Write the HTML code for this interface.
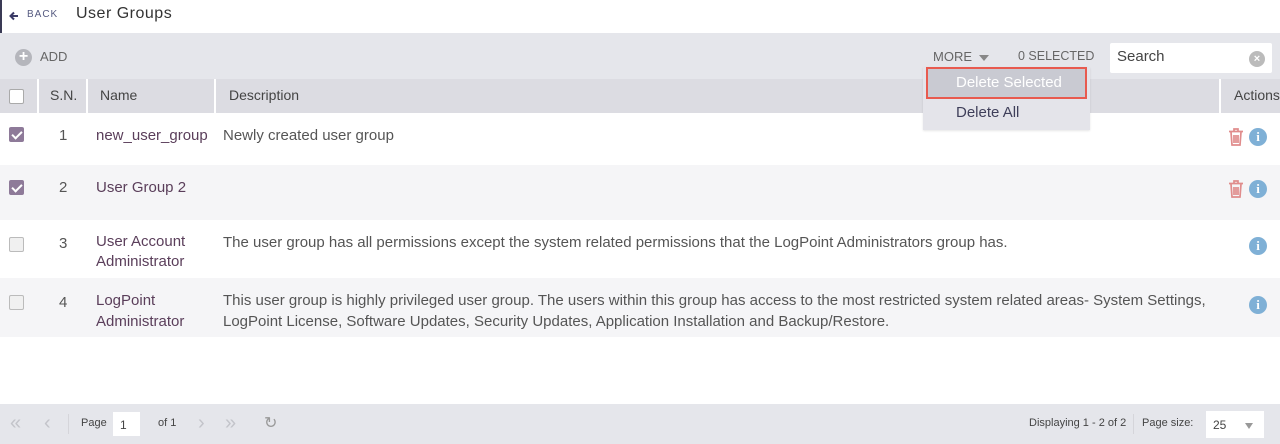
<!DOCTYPE html>
<html><head><style>
*{margin:0;padding:0;box-sizing:border-box}
body{width:1280px;height:444px;overflow:hidden;background:#fff;font-family:"Liberation Sans",sans-serif;color:#555;position:relative}
.abs{position:absolute}
.hdr{top:0;left:0;width:1280px;height:33px;background:#fff;border-left:2px solid #3a3a55}
.tb{top:33px;left:0;width:1280px;height:46px;background:#e5e6eb}
.th{top:79px;left:0;width:1280px;height:34px;background:#dcdce2;font-size:14px;color:#444}
.row{left:0;width:1280px;font-size:15px}
.cb{position:absolute;left:9px;width:15px;height:15px;border:1px solid #aaa;background:#fff;border-radius:2px}
.cb.on{background:#8e7a99;border-color:#8e7a99}
.cb.on:after{content:"";position:absolute;left:4px;top:1px;width:4px;height:8px;border:solid #fff;border-width:0 2px 2px 0;transform:rotate(45deg)}
.sep{position:absolute;top:0;width:2px;height:34px;background:#fff}
.foot{top:404px;left:0;width:1280px;height:40px;background:#e5e6eb;font-size:11px;color:#444}
.info{position:absolute;width:18px;height:18px;border-radius:50%;background:#7fb0d6;color:#fff;font-size:13px;font-weight:bold;text-align:center;line-height:18px;font-family:"Liberation Serif",serif}
.trash{position:absolute;width:16px;height:18px}
.name{color:#5a3e5a}
</style></head><body>
<div class="abs hdr">
 <svg class="abs" style="left:7px;top:11px" width="10" height="10" viewBox="0 0 10 10"><path d="M9 5H2M5 1.5L1.5 5 5 8.5" stroke="#3a3a66" stroke-width="2" fill="none"/></svg>
 <span class="abs" style="left:25px;top:9px;font-size:10px;letter-spacing:1px;color:#555a80">BACK</span>
 <span class="abs" style="left:74px;top:5px;font-size:16px;color:#333;letter-spacing:.5px">User Groups</span>
</div>
<div class="abs tb">
 <div class="abs" style="left:15px;top:16px;width:17px;height:17px;border-radius:50%;background:#b5b6bc;color:#fff;font-size:16px;line-height:16px;text-align:center;font-weight:bold">+</div>
 <span class="abs" style="left:40px;top:16px;font-size:13px;color:#666">ADD</span>
 <span class="abs" style="left:933px;top:16px;font-size:13px;color:#666">MORE</span>
 <div class="abs" style="left:979px;top:22px;border:5px solid transparent;border-top:6px solid #888"></div>
 <span class="abs" style="left:1018px;top:16px;font-size:12.5px;color:#666">0 SELECTED</span>
 <div class="abs" style="left:1110px;top:10px;width:162px;height:30px;background:#fff;border-radius:2px">
  <span class="abs" style="left:7px;top:5px;font-size:15px;color:#444">Search</span>
  <div class="abs" style="left:139px;top:8px;width:16px;height:16px;border-radius:50%;background:#bbb;color:#fff;font-size:11px;text-align:center;line-height:16px;font-weight:bold">×</div>
 </div>
</div>
<div class="abs th">
 <div class="cb" style="top:10px"></div>
 <div class="sep" style="left:37px"></div><div class="sep" style="left:86px"></div><div class="sep" style="left:214px"></div><div class="sep" style="left:1219px"></div>
 <span class="abs" style="left:50px;top:8px">S.N.</span>
 <span class="abs" style="left:100px;top:8px">Name</span>
 <span class="abs" style="left:229px;top:8px">Description</span>
 <span class="abs" style="left:1234px;top:8px">Actions</span>
</div>
<div class="abs row" style="top:113px;height:52px;background:#fff">
 <div class="cb on" style="top:14px"></div>
 <span class="abs" style="left:59px;top:14px">1</span>
 <span class="abs name" style="left:96px;top:14px">new_user_group</span>
 <span class="abs" style="left:223px;top:14px">Newly created user group</span>
 <svg class="trash" style="left:1228px;top:15px" viewBox="0 0 16 18"><path d="M1 3.5h14M6 3V1h4v2M3 4l1 13h8l1-13M6 7v8M8 7v8M10 7v8" stroke="#e08c8c" stroke-width="1.7" fill="none"/></svg>
 <div class="info" style="left:1249px;top:15px">i</div>
</div>
<div class="abs row" style="top:165px;height:55px;background:#f5f5f7">
 <div class="cb on" style="top:15px"></div>
 <span class="abs" style="left:59px;top:14px">2</span>
 <span class="abs name" style="left:96px;top:14px">User Group 2</span>
 <svg class="trash" style="left:1228px;top:15px" viewBox="0 0 16 18"><path d="M1 3.5h14M6 3V1h4v2M3 4l1 13h8l1-13M6 7v8M8 7v8M10 7v8" stroke="#e08c8c" stroke-width="1.7" fill="none"/></svg>
 <div class="info" style="left:1249px;top:15px">i</div>
</div>
<div class="abs row" style="top:220px;height:58px;background:#fff">
 <div class="cb" style="top:17px;border-color:#bbb;background:#f0f0f0"></div>
 <span class="abs" style="left:59px;top:15px">3</span>
 <span class="abs name" style="left:96px;top:12px;line-height:20px">User Account<br>Administrator</span>
 <span class="abs" style="left:223px;top:14px">The user group has all permissions except the system related permissions that the LogPoint Administrators group has.</span>
 <div class="info" style="left:1249px;top:17px">i</div>
</div>
<div class="abs row" style="top:278px;height:59px;background:#f5f5f7">
 <div class="cb" style="top:17px;border-color:#bbb;background:#f0f0f0"></div>
 <span class="abs" style="left:59px;top:16px">4</span>
 <span class="abs name" style="left:96px;top:12px;line-height:21px">LogPoint<br>Administrator</span>
 <span class="abs" style="left:223px;top:12px;line-height:21px">This user group is highly privileged user group. The users within this group has access to the most restricted system related areas- System Settings,<br>LogPoint License, Software Updates, Security Updates, Application Installation and Backup/Restore.</span>
 <div class="info" style="left:1249px;top:18px">i</div>
</div>
<div class="abs" style="left:923px;top:67px;width:167px;height:63px;background:#e4e4ea;box-shadow:0 1px 2px rgba(0,0,0,.1)">
 <div class="abs" style="left:3px;top:0;width:161px;height:32px;background:#c9cad2;border:2px solid #e85a4f"></div>
 <span class="abs" style="left:33px;top:7px;font-size:15px;color:#fff">Delete Selected</span>
 <span class="abs" style="left:33px;top:37px;font-size:15px;color:#3f3f5a">Delete All</span>
</div>
<div class="abs foot">
 <span class="abs" style="left:10px;top:8px;font-size:20px;color:#c3c4ca">«</span>
 <span class="abs" style="left:44px;top:8px;font-size:20px;color:#c3c4ca">‹</span>
 <div class="abs" style="left:68px;top:10px;width:1px;height:20px;background:#d5d5da"></div>
 <span class="abs" style="left:81px;top:13px">Page</span>
 <div class="abs" style="left:113px;top:8px;width:27px;height:24px;background:#fff"><span class="abs" style="left:7px;top:6px;font-size:12px">1</span></div>
 <span class="abs" style="left:158px;top:13px">of 1</span>
 <span class="abs" style="left:198px;top:8px;font-size:20px;color:#c3c4ca">›</span>
 <span class="abs" style="left:225px;top:8px;font-size:20px;color:#c3c4ca">»</span>
 <span class="abs" style="left:264px;top:9px;font-size:16px;color:#999">↻</span>
 <span class="abs" style="left:1029px;top:13px">Displaying 1 - 2 of 2</span>
 <div class="abs" style="left:1133px;top:10px;width:1px;height:20px;background:#d5d5da"></div>
 <span class="abs" style="left:1142px;top:13px">Page size:</span>
 <div class="abs" style="left:1206px;top:7px;width:58px;height:27px;background:#fff"><span class="abs" style="left:7px;top:7px;font-size:12px">25</span><div class="abs" style="left:39px;top:12px;border:4px solid transparent;border-top:6px solid #999"></div></div>
</div>
</body></html>
